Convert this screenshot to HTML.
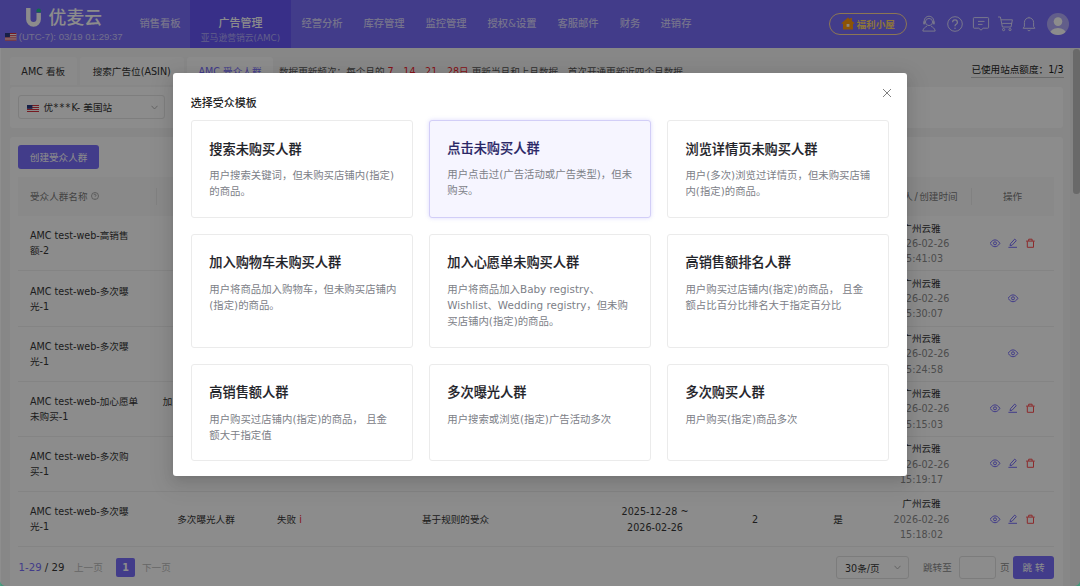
<!DOCTYPE html>
<html lang="zh-CN">
<head>
<meta charset="utf-8">
<title>优麦云 - AMC 受众人群</title>
<style>
*{box-sizing:border-box;margin:0;padding:0}
html,body{width:1080px;height:586px;overflow:hidden}
body{font-family:"DejaVu Sans","Noto Sans CJK SC",sans-serif;font-size:11px;color:#333;background:#f6f6f6;position:relative}
.abs{position:absolute}
/* header */
#hdr{position:absolute;left:0;top:0;width:1080px;height:48px;background:#786dfb}
#logo{position:absolute;left:25px;top:5px;width:80px;height:24px}
#logotxt{position:absolute;left:48.5px;top:4px;font-size:17.8px;line-height:28px;color:#fff;letter-spacing:0.1px;font-weight:500}
#utc{position:absolute;left:18.7px;top:30px;font-family:"Liberation Sans","Noto Sans CJK SC",sans-serif;font-size:9.6px;line-height:14px;color:#cfc9ff;white-space:nowrap}
.flag{display:inline-block;vertical-align:middle}
.nav{position:absolute;top:0;height:48px;font-size:10.3px;color:#d6d1ff;line-height:14px;white-space:nowrap;text-align:center;font-weight:500}
.nav span{position:absolute;left:0;right:0;top:15.8px}
#navact{position:absolute;left:190px;top:0;width:101px;height:48px;background:#6657f7;text-align:center;color:#fff}
#navact b{position:absolute;left:0;right:0;top:16.6px;font-size:11px;line-height:14px;font-weight:500}
#navact i{position:absolute;left:0;right:0;top:32.2px;font-size:8.8px;line-height:12px;font-style:normal;color:#b3acfa}
#fuli{position:absolute;left:829px;top:13px;width:78px;height:21.7px;border:1px solid #ffd89a;border-radius:11px;color:#ffd56b;font-size:9.6px;line-height:19.7px;white-space:nowrap;font-weight:700}
#fuli span{position:absolute;left:26.5px;top:1.2px}
.hic{position:absolute;top:15px;width:18px;height:18px}
/* scrollbar */
#sbar{position:absolute;left:1070px;top:48px;width:10px;height:538px;background:#f1f1f1}
#sthumb{position:absolute;left:3px;top:0.5px;width:6.5px;height:145.5px;background:#bfbfbf;border-radius:3.3px}
/* tabs */
.tab{position:absolute;top:57px;height:28.2px;background:#fbfbfb;border-radius:3px 3px 0 0;font-size:9.6px;line-height:29.6px;text-align:center;color:#333;white-space:nowrap}
.tab.act{background:#fff;color:#786dfb}
.panel{position:absolute;background:#fff;border-radius:3px}
#tip{position:absolute;left:279px;top:64px;font-size:9.6px;line-height:16px;color:#555;white-space:nowrap}
#tip em{font-style:normal;color:#f5222d}
#quota{position:absolute;left:971.4px;top:63.4px;font-size:9.6px;line-height:13.6px;color:#222;white-space:nowrap;border-bottom:1px solid #c4c4c4}
#sel1{position:absolute;left:18px;top:95.4px;width:146.8px;height:23.4px;border:1px solid #e6e6e6;border-radius:3px;background:#fff;font-size:9.6px;line-height:22px;color:#333;white-space:nowrap}
#btn-create{position:absolute;left:18px;top:145.4px;width:81.2px;height:23.6px;background:#786dfb;border-radius:3px;color:#fff;font-size:9.6px;line-height:26.4px;text-align:center}
#thead{position:absolute;left:18px;top:176.5px;width:1036px;height:39.3px;background:#fafafa}
.th{position:absolute;top:188.8px;font-size:9.6px;line-height:16px;color:#7a7a7a;white-space:nowrap}
.row{position:absolute;left:18px;width:1036px;height:55.16px;border-bottom:1px solid #f0f0f0}
.c{position:absolute;font-size:9.6px;line-height:15.1px;color:#363636;white-space:nowrap}
.c.g,.c .g{color:#8c8c8c}
.ctr{text-align:center}
.ic{position:absolute}
.sep{position:absolute;top:188px;width:1px;height:17px;background:#ececec}
/* overlay + modal */
#mask{position:absolute;left:0;top:0;width:1080px;height:586px;background:rgba(0,0,0,.45)}
#modal{position:absolute;left:172.8px;top:73.1px;width:734.4px;height:402.9px;background:#fff;border-radius:3px;box-shadow:0 2.4px 4.8px -3.2px rgba(0,0,0,.14),0 4.8px 12.8px rgba(0,0,0,.10),0 7.2px 22.4px 6.4px rgba(0,0,0,.06)}
#mtitle{position:absolute;left:18px;top:21.7px;font-size:11px;line-height:18px;color:#1f1f1f;font-weight:500;white-space:nowrap}
#mclose{position:absolute;left:709px;top:15px;width:10px;height:10px}
.card{position:absolute;width:222.3px;background:#fff;border:1px solid #ebebeb;border-radius:3px}
.card h4{position:absolute;left:17.6px;top:18.4px;font-size:13.2px;line-height:20px;font-weight:500;-webkit-text-stroke:0.15px currentColor;color:#1f2329;white-space:nowrap}
.card p{position:absolute;left:17.6px;top:45.6px;width:187.7px;font-size:10.4px;line-height:16.34px;color:#7c8087}
.card.hov{background:#f6f5ff;border-color:#d2cef7;border-top-width:1.6px;box-shadow:0 0 4px rgba(120,109,251,.25)}
.card.hov h4{color:#2a2666;top:18.1px}
.card.hov p{top:45.3px}
</style>
</head>
<body>
<div id="hdr">
<svg id="logo" viewBox="0 0 80 24" width="80" height="24"><path d="M1.1 3.1 h4.4 v11 a3 3 0 0 0 6 0 v-6 h4.4 v6.2 a7.4 7.4 0 0 1 -14.8 0 z" fill="#fff"/><path d="M11.5 7.2 v-1.6 a2.2 2.2 0 0 1 4.4 0 v1.6 z" fill="#1fbf8f"/></svg>
<div id="logotxt">优麦云</div>
<div id="utc"><svg class="flag" width="11.4" height="7.6" viewBox="0 0 12 8" preserveAspectRatio="none" style="position:absolute;left:-13.5px;top:3px"><rect width="12" height="8" fill="#fff"/><g fill="#d8323f"><rect y="0" width="12" height="1.1"/><rect y="2.3" width="12" height="1.1"/><rect y="4.6" width="12" height="1.1"/><rect y="6.9" width="12" height="1.1"/></g><rect width="5.2" height="4.4" fill="#2a3a80"/></svg>(UTC-7): 03/19 01:29:37</div>
<div class="nav" style="left:139px;width:42px"><span>销售看板</span></div>
<div id="navact"><b>广告管理</b><i>亚马逊营销云(AMC)</i></div>
<div class="nav" style="left:301px;width:42px"><span>经营分析</span></div>
<div class="nav" style="left:363px;width:42px"><span>库存管理</span></div>
<div class="nav" style="left:425px;width:42px"><span>监控管理</span></div>
<div class="nav" style="left:486px;width:52px"><span>授权&amp;设置</span></div>
<div class="nav" style="left:557px;width:42px"><span>客服邮件</span></div>
<div class="nav" style="left:619px;width:22px"><span>财务</span></div>
<div class="nav" style="left:660px;width:32px"><span>进销存</span></div>
<div id="fuli"><svg width="14" height="13" viewBox="0 0 14 13" style="position:absolute;left:11px;top:3px"><path d="M7 0.4 L13.6 6.2 L12.9 7 L12 6.2 V12.4 H2 V6.2 L1.1 7 L0.4 6.2 Z" fill="#ff9a0c"/><rect x="9.2" y="1" width="1.7" height="3" fill="#ff9a0c"/><rect x="5.6" y="7" width="2.8" height="2.8" fill="#fff4e0"/></svg><span>福利小屋</span></div>
<svg class="hic" style="left:920px" viewBox="0 0 18 18" fill="none" stroke="#e2dfff" stroke-width="0.95"><circle cx="9" cy="7" r="3.6"/><path d="M2.8 16 c0.5-2.8 2.6-4.1 4.1-4.6 M15.2 16 c-0.5-2.8-2.6-4.1-4.1-4.6 M2.8 16.1 h12.4"/><path d="M4.2 7.4 V6 a4.8 4.8 0 0 1 9.6 0 v1.4" /><rect x="3.2" y="6.2" width="1.8" height="3.4" rx=".8" fill="#d9d5ff" stroke="none"/><rect x="13" y="6.2" width="1.8" height="3.4" rx=".8" fill="#d9d5ff" stroke="none"/></svg>
<svg class="hic" style="left:946px" viewBox="0 0 18 18" fill="none" stroke="#e2dfff" stroke-width="0.95"><circle cx="9" cy="9" r="7.3"/><path d="M6.6 7.2 a2.4 2.4 0 1 1 3.6 2.1 c-0.9 0.5-1.2 1-1.2 2" stroke-width="1.3"/><circle cx="9" cy="13.2" r=".8" fill="#d9d5ff" stroke="none"/></svg>
<svg class="hic" style="left:972px" viewBox="0 0 18 18" fill="none" stroke="#e2dfff" stroke-width="0.95"><path d="M2.2 2.6 h13.6 a.8 .8 0 0 1 .8 .8 v9 a.8 .8 0 0 1 -.8 .8 h-4.6 l-2.2 2 l-2.2 -2 h-4.6 a.8 .8 0 0 1 -.8 -.8 v-9 a.8 .8 0 0 1 .8 -.8 z"/><path d="M6 6.4 h6.5 M6 9.4 h4.5"/></svg>
<svg class="hic" style="left:997px" viewBox="0 0 18 18" fill="none" stroke="#e2dfff" stroke-width="0.95"><path d="M1 2 h2.4 l2 10 h8.6 l1.4 -7.2 h-11.4"/><path d="M5.2 8.4 h9.8"/><circle cx="6.6" cy="14.6" r="1.1"/><circle cx="13" cy="14.6" r="1.1"/></svg>
<svg class="hic" style="left:1020px" viewBox="0 0 18 18" fill="none" stroke="#e2dfff" stroke-width="0.95"><path d="M9 2.8 a4.6 4.6 0 0 1 4.6 4.6 v4 l1.2 1.9 h-11.6 l1.2 -1.9 v-4 a4.6 4.6 0 0 1 4.6 -4.6 z"/><path d="M7.6 14.8 a1.5 1.5 0 0 0 2.8 0 M9 2.8 v-1"/></svg>
<svg style="position:absolute;left:1047px;top:13px" width="22" height="22" viewBox="0 0 23 23"><defs><clipPath id="av"><circle cx="11.5" cy="11.5" r="11.5"/></clipPath></defs><circle cx="11.5" cy="11.5" r="11.5" fill="#b3acfc"/><g clip-path="url(#av)" fill="#fff"><circle cx="11.5" cy="9" r="4.5"/><ellipse cx="11.5" cy="21.8" rx="8.6" ry="6.2"/></g></svg>
</div>
<div id="main">
<div class="tab" style="left:9.5px;width:67.5px">AMC 看板</div>
<div class="tab" style="left:80px;width:103.5px">搜索广告位(ASIN)</div>
<div class="tab act" style="left:187px;width:86px">AMC 受众人群</div>
<div id="tip">数据更新频次：每个月的 <em>7、14、21、28日</em> 更新当月和上月数据，首次开通更新近四个月数据</div>
<div id="quota">已使用站点额度：1/3</div>
<div class="panel" style="left:9.6px;top:87px;width:1053.4px;height:40.5px"></div>
<div id="sel1"><svg width="12" height="7" viewBox="0 0 12 7" style="position:absolute;left:8px;top:8.7px"><rect width="12" height="7" fill="#fff"/><g fill="#d8323f"><rect y="0" width="12" height="1"/><rect y="2" width="12" height="1"/><rect y="4" width="12" height="1"/><rect y="6" width="12" height="1"/></g><rect width="5.4" height="3.8" fill="#2a3a80"/></svg><span style="position:absolute;left:24.4px;top:0.6px">优<span style="letter-spacing:1.2px;margin-left:0.6px">***</span>K- 美国站</span><svg width="7" height="5" viewBox="0 0 7 5" style="position:absolute;left:132px;top:9px" fill="none" stroke="#b5b5b5" stroke-width="1"><path d="M0.5 0.8 L3.5 4 L6.5 0.8"/></svg></div>
<div class="panel" style="left:9.6px;top:137px;width:1053.4px;height:460px"></div>
<div id="btn-create">创建受众人群</div>
<div id="thead"></div><div class="sep" style="left:155.6px"></div><div class="sep" style="left:970.5px"></div>
<div class="th" style="left:30px">受众人群名称 <svg width="8" height="8" viewBox="0 0 8 8" style="vertical-align:-0.5px" fill="none" stroke="#999" stroke-width=".8"><circle cx="4" cy="4" r="3.5"/><path d="M3 3.2 a1 1 0 1 1 1.6 .8 c-.4 .3 -.6 .5 -.6 1 M4 6 v.5"/></svg></div>
<div class="th" style="left:126px;width:160px;text-align:center">受众人群类型</div>
<div class="th" style="left:884px">创建人<span style="margin:0 1.6px">/</span>创建时间</div>
<div class="th" style="left:1003px">操作</div>
<div class="row" style="top:216.20px"></div>
<div class="c" style="left:30px;top:228.40px">AMC test-web-高销售<br>额-2</div>
<div class="c ctr" style="left:126px;width:160px;top:236.00px">高销售额人群</div>
<div class="c ctr" style="left:871.5px;width:100px;line-height:15.4px;top:220.50px">广州云雅<br><span class="g">2026-02-26</span><br><span class="g">15:41:03</span></div>
<svg class="ic" style="left:990px;top:237.80px" width="11" height="11" viewBox="0 0 11 11" fill="none" stroke="#786dfb" stroke-width="1"><path d="M0.1 5.3 C1.8 2.7 3.5 1.9 5 1.9 S8.2 2.7 9.9 5.3 C8.2 7.9 6.5 8.7 5 8.7 S1.8 7.9 0.1 5.3 Z"/><circle cx="5" cy="5.3" r="1.5"/></svg>
<svg class="ic" style="left:1008px;top:237.80px" width="11" height="11" viewBox="0 0 11 11" fill="none" stroke="#786dfb" stroke-width="1"><path d="M2 7.7 L2.5 5.7 L6.7 1.1 L8.3 2.6 L4.1 7.2 Z M0.4 9.3 H9"/></svg>
<svg class="ic" style="left:1025px;top:237.80px" width="11" height="11" viewBox="0 0 11 11" fill="none" stroke="#ff4d4f" stroke-width="1"><path d="M1.1 3.1 H9.7 M3.7 3 V1.2 H7.1 V3 M2.3 3.3 V9.3 H8.5 V3.3"/></svg>
<div class="row" style="top:271.36px"></div>
<div class="c" style="left:30px;top:283.56px">AMC test-web-多次曝<br>光-1</div>
<div class="c ctr" style="left:126px;width:160px;top:291.16px">多次曝光人群</div>
<div class="c ctr" style="left:871.5px;width:100px;line-height:15.4px;top:275.66px">广州云雅<br><span class="g">2026-02-26</span><br><span class="g">15:30:07</span></div>
<svg class="ic" style="left:1008px;top:292.96px" width="11" height="11" viewBox="0 0 11 11" fill="none" stroke="#786dfb" stroke-width="1"><path d="M0.1 5.3 C1.8 2.7 3.5 1.9 5 1.9 S8.2 2.7 9.9 5.3 C8.2 7.9 6.5 8.7 5 8.7 S1.8 7.9 0.1 5.3 Z"/><circle cx="5" cy="5.3" r="1.5"/></svg>
<div class="row" style="top:326.52px"></div>
<div class="c" style="left:30px;top:338.72px">AMC test-web-多次曝<br>光-1</div>
<div class="c ctr" style="left:126px;width:160px;top:346.32px">多次曝光人群</div>
<div class="c ctr" style="left:871.5px;width:100px;line-height:15.4px;top:330.82px">广州云雅<br><span class="g">2026-02-26</span><br><span class="g">15:24:58</span></div>
<svg class="ic" style="left:1008px;top:348.12px" width="11" height="11" viewBox="0 0 11 11" fill="none" stroke="#786dfb" stroke-width="1"><path d="M0.1 5.3 C1.8 2.7 3.5 1.9 5 1.9 S8.2 2.7 9.9 5.3 C8.2 7.9 6.5 8.7 5 8.7 S1.8 7.9 0.1 5.3 Z"/><circle cx="5" cy="5.3" r="1.5"/></svg>
<div class="row" style="top:381.68px"></div>
<div class="c" style="left:30px;top:393.88px">AMC test-web-加心愿单<br>未购买-1</div>
<div class="c ctr" style="left:126px;width:160px;top:393.98px">加入心愿单未购买人<br>群</div>
<div class="c ctr" style="left:871.5px;width:100px;line-height:15.4px;top:385.98px">广州云雅<br><span class="g">2026-02-26</span><br><span class="g">15:15:03</span></div>
<svg class="ic" style="left:990px;top:403.28px" width="11" height="11" viewBox="0 0 11 11" fill="none" stroke="#786dfb" stroke-width="1"><path d="M0.1 5.3 C1.8 2.7 3.5 1.9 5 1.9 S8.2 2.7 9.9 5.3 C8.2 7.9 6.5 8.7 5 8.7 S1.8 7.9 0.1 5.3 Z"/><circle cx="5" cy="5.3" r="1.5"/></svg>
<svg class="ic" style="left:1008px;top:403.28px" width="11" height="11" viewBox="0 0 11 11" fill="none" stroke="#786dfb" stroke-width="1"><path d="M2 7.7 L2.5 5.7 L6.7 1.1 L8.3 2.6 L4.1 7.2 Z M0.4 9.3 H9"/></svg>
<svg class="ic" style="left:1025px;top:403.28px" width="11" height="11" viewBox="0 0 11 11" fill="none" stroke="#ff4d4f" stroke-width="1"><path d="M1.1 3.1 H9.7 M3.7 3 V1.2 H7.1 V3 M2.3 3.3 V9.3 H8.5 V3.3"/></svg>
<div class="row" style="top:436.84px"></div>
<div class="c" style="left:30px;top:449.04px">AMC test-web-多次购<br>买-1</div>
<div class="c ctr" style="left:126px;width:160px;top:456.64px">多次购买人群</div>
<div class="c ctr" style="left:871.5px;width:100px;line-height:15.4px;top:441.14px">广州云雅<br><span class="g">2026-02-26</span><br><span class="g">15:19:17</span></div>
<svg class="ic" style="left:990px;top:458.44px" width="11" height="11" viewBox="0 0 11 11" fill="none" stroke="#786dfb" stroke-width="1"><path d="M0.1 5.3 C1.8 2.7 3.5 1.9 5 1.9 S8.2 2.7 9.9 5.3 C8.2 7.9 6.5 8.7 5 8.7 S1.8 7.9 0.1 5.3 Z"/><circle cx="5" cy="5.3" r="1.5"/></svg>
<svg class="ic" style="left:1008px;top:458.44px" width="11" height="11" viewBox="0 0 11 11" fill="none" stroke="#786dfb" stroke-width="1"><path d="M2 7.7 L2.5 5.7 L6.7 1.1 L8.3 2.6 L4.1 7.2 Z M0.4 9.3 H9"/></svg>
<svg class="ic" style="left:1025px;top:458.44px" width="11" height="11" viewBox="0 0 11 11" fill="none" stroke="#ff4d4f" stroke-width="1"><path d="M1.1 3.1 H9.7 M3.7 3 V1.2 H7.1 V3 M2.3 3.3 V9.3 H8.5 V3.3"/></svg>
<div class="row" style="top:492.00px"></div>
<div class="c" style="left:30px;top:504.20px">AMC test-web-多次曝<br>光-1</div>
<div class="c ctr" style="left:126px;width:160px;top:511.80px">多次曝光人群</div>
<div class="c ctr" style="left:871.5px;width:100px;line-height:15.4px;top:496.30px">广州云雅<br><span class="g">2026-02-26</span><br><span class="g">15:18:02</span></div>
<svg class="ic" style="left:990px;top:513.60px" width="11" height="11" viewBox="0 0 11 11" fill="none" stroke="#786dfb" stroke-width="1"><path d="M0.1 5.3 C1.8 2.7 3.5 1.9 5 1.9 S8.2 2.7 9.9 5.3 C8.2 7.9 6.5 8.7 5 8.7 S1.8 7.9 0.1 5.3 Z"/><circle cx="5" cy="5.3" r="1.5"/></svg>
<svg class="ic" style="left:1008px;top:513.60px" width="11" height="11" viewBox="0 0 11 11" fill="none" stroke="#786dfb" stroke-width="1"><path d="M2 7.7 L2.5 5.7 L6.7 1.1 L8.3 2.6 L4.1 7.2 Z M0.4 9.3 H9"/></svg>
<svg class="ic" style="left:1025px;top:513.60px" width="11" height="11" viewBox="0 0 11 11" fill="none" stroke="#ff4d4f" stroke-width="1"><path d="M1.1 3.1 H9.7 M3.7 3 V1.2 H7.1 V3 M2.3 3.3 V9.3 H8.5 V3.3"/></svg>
<div class="c" style="left:277px;top:511.80px">失败 <span style="color:#f5222d">i</span></div>
<div class="c" style="left:422px;top:511.80px">基于规则的受众</div>
<div class="c ctr" style="left:605px;width:100px;line-height:15.5px;top:504.40px">2025-12-28 ~<br>2026-02-26</div>
<div class="c ctr" style="left:735px;width:40px;top:511.80px">2</div>
<div class="c ctr" style="left:818px;width:40px;top:511.80px">是</div>
<div class="c" style="left:18.5px;top:559.5px;font-size:10.2px"><span style="color:#786dfb">1-29</span> / 29</div>
<div class="c" style="left:74px;top:560px;color:#bbb">上一页</div>
<div style="position:absolute;left:116px;top:558px;width:19px;height:19px;background:#786dfb;border-radius:2px;color:#fff;font-size:9.6px;line-height:19px;text-align:center;font-weight:700">1</div>
<div class="c" style="left:142px;top:560px;color:#bbb">下一页</div>
<div style="position:absolute;left:836px;top:556px;width:73px;height:23px;border:1px solid #e2e2e2;border-radius:3px;background:#fff"><span class="c" style="left:8px;top:3.5px">30条/页</span><svg width="7" height="5" viewBox="0 0 7 5" style="position:absolute;left:57px;top:8px" fill="none" stroke="#b5b5b5" stroke-width="1"><path d="M0.5 0.8 L3.5 4 L6.5 0.8"/></svg></div>
<div class="c g" style="left:923px;top:560px">跳转至</div>
<div style="position:absolute;left:959px;top:556px;width:37px;height:23px;border:1px solid #e2e2e2;border-radius:3px;background:#fff"></div>
<div class="c g" style="left:1000px;top:560px">页</div>
<div style="position:absolute;left:1013px;top:556px;width:41px;height:23px;background:#786dfb;border-radius:3px;color:#fff;font-size:9.6px;line-height:23px;text-align:center">跳 转</div>
</div>
<div id="sbar"><div id="sthumb"></div></div>
<div id="mask"></div>
<div style="position:absolute;left:0;top:580px;width:6px;height:6px;background:radial-gradient(circle at 100% 0,rgba(70,150,120,0) 5.6px,#46967a 6.4px)"></div>
<div style="position:absolute;left:1074px;top:580px;width:6px;height:6px;background:radial-gradient(circle at 0 0,rgba(70,150,120,0) 5.6px,#46967a 6.4px)"></div>
<div style="position:absolute;left:0;top:48px;width:1.2px;height:538px;background:rgba(255,255,255,.06)"></div>
<div id="modal">
<div id="mtitle">选择受众模板</div>
<svg id="mclose" viewBox="0 0 10 10" fill="none" stroke="#7a7a7a" stroke-width="0.95"><path d="M1 1 L9 9 M9 1 L1 9"/></svg>
<div class="card" style="left:17.9px;top:47.4px;height:97.3px"><h4>搜索未购买人群</h4><p>用户搜索关键词，但未购买店铺内(指定)的商品。</p></div>
<div class="card hov" style="left:255.9px;top:46.6px;height:98.1px"><h4>点击未购买人群</h4><p>用户点击过(广告活动或广告类型)，但未购买。</p></div>
<div class="card" style="left:494.1px;top:47.4px;height:97.3px"><h4>浏览详情页未购买人群</h4><p>用户(多次)浏览过详情页，但未购买店铺内(指定)的商品。</p></div>
<div class="card" style="left:17.9px;top:160.9px;height:114px"><h4>加入购物车未购买人群</h4><p>用户将商品加入购物车，但未购买店铺内(指定)的商品。</p></div>
<div class="card" style="left:255.9px;top:160.9px;height:114px"><h4>加入心愿单未购买人群</h4><p>用户将商品加入Baby registry、Wishlist、Wedding registry，但未购买店铺内(指定)的商品。</p></div>
<div class="card" style="left:494.1px;top:160.9px;height:114px"><h4>高销售额排名人群</h4><p>用户购买过店铺内(指定)的商品， 且金额占比百分比排名大于指定百分比</p></div>
<div class="card" style="left:17.9px;top:290.9px;height:97.5px"><h4>高销售额人群</h4><p>用户购买过店铺内(指定)的商品， 且金额大于指定值</p></div>
<div class="card" style="left:255.9px;top:290.9px;height:97.5px"><h4>多次曝光人群</h4><p>用户搜索或浏览(指定)广告活动多次</p></div>
<div class="card" style="left:494.1px;top:290.9px;height:97.5px"><h4>多次购买人群</h4><p>用户购买(指定)商品多次</p></div>
</div>
</body>
</html>
